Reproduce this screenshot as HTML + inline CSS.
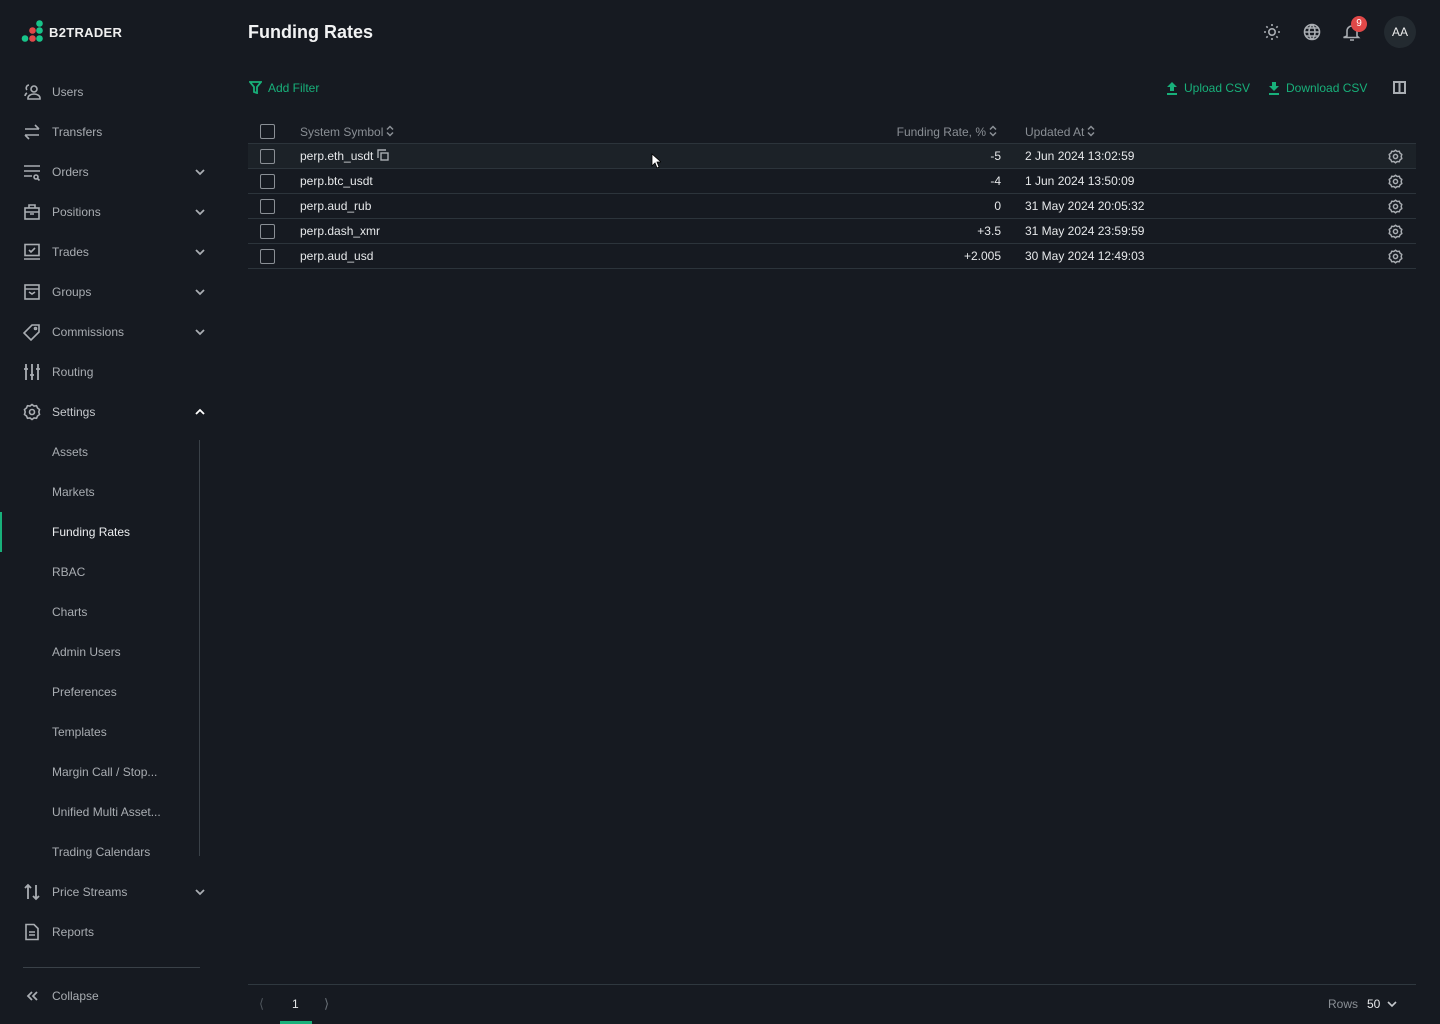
<!DOCTYPE html>
<html><head><meta charset="utf-8"><style>
*{margin:0;padding:0;box-sizing:border-box}
body{width:1440px;height:1024px;background:#161a21;font-family:"Liberation Sans",sans-serif;color:#e6e8ea;position:relative;overflow:hidden;font-size:12px}
.a{position:absolute}
.nav{position:absolute;left:52px;font-size:12px;color:#a9adb2;line-height:14px}
.ic{position:absolute;left:23px;width:18px;height:18px}
.chev{position:absolute;left:194px;width:12px;height:12px}
.sub{position:absolute;left:52px;font-size:12px;color:#a9adb2;line-height:14px}
.row{position:absolute;left:248px;width:1168px;height:25px;border-bottom:1px solid #2c343b}
.cb{position:absolute;left:12px;top:5px;width:15px;height:15px;border:1.5px solid #8a8f95;border-radius:2px}
.sym{position:absolute;left:52px;top:5px;font-size:12px;color:#e6e8ea}
.rate{position:absolute;right:415px;top:5px;font-size:12px}
.dt{position:absolute;left:777px;top:5px;font-size:12px}
.gear{position:absolute;left:1140px;top:5px;width:15px;height:15px}
.green{color:#18b07a}
.srt{vertical-align:-1px;margin-left:3px}
</style></head><body>
<svg class="a" style="left:21px;top:20px" width="23" height="23" viewBox="0 0 23 23">
<circle cx="18.5" cy="3.5" r="3.3" fill="#18c48a"/><circle cx="11.5" cy="10.5" r="3.3" fill="#e04848"/><circle cx="18.5" cy="10.5" r="3.3" fill="#18c48a"/>
<circle cx="4" cy="18.5" r="3.3" fill="#18c48a"/><circle cx="11.5" cy="18.5" r="3.3" fill="#e04848"/><circle cx="18.5" cy="18.5" r="3.3" fill="#18c48a"/></svg>
<div class="a" style="left:49px;top:25px;font-weight:bold;font-size:13px;color:#f0f0f0;letter-spacing:0.3px">B2TRADER</div>

<svg class="ic" style="top:83px" viewBox="0 0 18 18" fill="none" stroke="#a9adb2" stroke-width="1.6"><circle cx="11" cy="6" r="3"/><path d="M5 16v-1a6 4 0 0 1 12 0v1z"/><path d="M6 2a3 3 0 0 0-2 5M2 13a4 4 0 0 1 2-3"/></svg>
<div class="nav" style="top:85px">Users</div>
<svg class="ic" style="top:123px" viewBox="0 0 18 18" fill="none" stroke="#a9adb2" stroke-width="1.6"><path d="M2 6h14M12 2l4 4M16 12H2M6 16l-4-4"/></svg>
<div class="nav" style="top:125px">Transfers</div>
<svg class="ic" style="top:163px" viewBox="0 0 18 18" fill="none" stroke="#a9adb2" stroke-width="1.6"><path d="M1 3h16M1 8h16M1 13h8"/><circle cx="13" cy="14" r="2"/><path d="M14.5 15.5l2 2"/></svg>
<div class="nav" style="top:165px">Orders</div>
<svg class="ic" style="top:203px" viewBox="0 0 18 18" fill="none" stroke="#a9adb2" stroke-width="1.6"><rect x="2" y="5" width="14" height="11"/><path d="M6 5V2h6v3M2 9h14M7 11h4"/></svg>
<div class="nav" style="top:205px">Positions</div>
<svg class="ic" style="top:243px" viewBox="0 0 18 18" fill="none" stroke="#a9adb2" stroke-width="1.6"><rect x="2" y="1.5" width="14" height="11"/><path d="M1 16h16M6 7l2 2 4-4"/></svg>
<div class="nav" style="top:245px">Trades</div>
<svg class="ic" style="top:283px" viewBox="0 0 18 18" fill="none" stroke="#a9adb2" stroke-width="1.6"><rect x="2" y="2" width="14" height="14"/><path d="M2 6h14M6 9l3 2 3-2"/></svg>
<div class="nav" style="top:285px">Groups</div>
<svg class="ic" style="top:323px" viewBox="0 0 18 18" fill="none" stroke="#a9adb2" stroke-width="1.6"><path d="M9 2h7v7l-8 8-7-7z"/><circle cx="12.5" cy="5.5" r="1"/></svg>
<div class="nav" style="top:325px">Commissions</div>
<svg class="ic" style="top:363px" viewBox="0 0 18 18" fill="none" stroke="#a9adb2" stroke-width="1.8"><path d="M3 1v16M9 1v16M15 1v16M1 6h4M7 12h4M13 6h4"/></svg>
<div class="nav" style="top:365px">Routing</div>
<svg class="ic" style="top:403px" viewBox="0 0 18 18" fill="none" stroke="#a9adb2" stroke-width="1.6"><path d="M9 1.5l2 1.5 2.5-.3 1 2.3 2 1.5-.7 2.5.7 2.5-2 1.5-1 2.3-2.5-.3-2 1.5-2-1.5-2.5.3-1-2.3-2-1.5.7-2.5-.7-2.5 2-1.5 1-2.3 2.5.3z"/><circle cx="9" cy="9" r="2.5"/></svg>
<div class="nav" style="top:405px;color:#c5c8cc">Settings</div>

<svg class="chev" style="top:166px" viewBox="0 0 12 12" fill="none" stroke="#a9adb2" stroke-width="1.8"><path d="M2 4l4 4 4-4"/></svg>
<svg class="chev" style="top:206px" viewBox="0 0 12 12" fill="none" stroke="#a9adb2" stroke-width="1.8"><path d="M2 4l4 4 4-4"/></svg>
<svg class="chev" style="top:246px" viewBox="0 0 12 12" fill="none" stroke="#a9adb2" stroke-width="1.8"><path d="M2 4l4 4 4-4"/></svg>
<svg class="chev" style="top:286px" viewBox="0 0 12 12" fill="none" stroke="#a9adb2" stroke-width="1.8"><path d="M2 4l4 4 4-4"/></svg>
<svg class="chev" style="top:326px" viewBox="0 0 12 12" fill="none" stroke="#a9adb2" stroke-width="1.8"><path d="M2 4l4 4 4-4"/></svg>
<svg class="chev" style="top:406px" viewBox="0 0 12 12" fill="none" stroke="#ffffff" stroke-width="1.8"><path d="M2 8l4-4 4 4"/></svg>
<svg class="chev" style="top:886px" viewBox="0 0 12 12" fill="none" stroke="#a9adb2" stroke-width="1.8"><path d="M2 4l4 4 4-4"/></svg>

<div class="a" style="left:199px;top:440px;width:1px;height:416px;background:#3a4148"></div>
<div class="sub" style="top:445px">Assets</div>
<div class="sub" style="top:485px">Markets</div>
<div class="a" style="left:0;top:512px;width:2px;height:40px;background:#18b07a"></div>
<div class="sub" style="top:525px;color:#eceef0">Funding Rates</div>
<div class="sub" style="top:565px">RBAC</div>
<div class="sub" style="top:605px">Charts</div>
<div class="sub" style="top:645px">Admin Users</div>
<div class="sub" style="top:685px">Preferences</div>
<div class="sub" style="top:725px">Templates</div>
<div class="sub" style="top:765px">Margin Call / Stop...</div>
<div class="sub" style="top:805px">Unified Multi Asset...</div>
<div class="sub" style="top:845px">Trading Calendars</div>

<svg class="ic" style="top:883px" viewBox="0 0 18 18" fill="none" stroke="#a9adb2" stroke-width="1.8"><path d="M5 16V2M2 5l3-3 3 3M13 2v14M10 13l3 3 3-3"/></svg>
<div class="nav" style="top:885px">Price Streams</div>
<svg class="ic" style="top:923px" viewBox="0 0 18 18" fill="none" stroke="#a9adb2" stroke-width="1.6"><path d="M3 1.5h8l4 4v11H3z"/><path d="M6 9h6M6 12h6"/></svg>
<div class="nav" style="top:925px">Reports</div>
<div class="a" style="left:23px;top:967px;width:177px;height:1px;background:#3a4148"></div>
<svg class="ic" style="top:987px" viewBox="0 0 18 18" fill="none" stroke="#a9adb2" stroke-width="1.8"><path d="M9 5l-4 4 4 4M14 5l-4 4 4 4"/></svg>
<div class="nav" style="top:989px">Collapse</div>

<div class="a" style="left:248px;top:22px;font-size:18px;font-weight:bold;color:#f2f3f4">Funding Rates</div>
<svg class="a" style="left:1263px;top:23px" width="18" height="18" viewBox="0 0 18 18" fill="none" stroke="#a9adb2" stroke-width="1.6"><circle cx="9" cy="9" r="3.2"/><path d="M9 1v2M9 15v2M1 9h2M15 9h2M3.3 3.3l1.4 1.4M13.3 13.3l1.4 1.4M3.3 14.7l1.4-1.4M13.3 4.7l1.4-1.4"/></svg>
<svg class="a" style="left:1303px;top:23px" width="18" height="18" viewBox="0 0 18 18" fill="none" stroke="#a9adb2" stroke-width="1.6"><circle cx="9" cy="9" r="7.5"/><path d="M1.5 9h15M9 1.5c-4 4-4 11 0 15M9 1.5c4 4 4 11 0 15M3 5h12M3 13h12"/></svg>
<svg class="a" style="left:1343px;top:23px" width="18" height="18" viewBox="0 0 18 18" fill="none" stroke="#a9adb2" stroke-width="1.6"><path d="M4 13V8a5 5 0 0 1 10 0v5l1.5 1.5h-15zM7 17h4"/></svg>
<div class="a" style="left:1351px;top:16px;width:16px;height:16px;border-radius:50%;background:#e04848;color:#fff;font-size:10px;text-align:center;line-height:16px">9</div>
<div class="a" style="left:1384px;top:16px;width:32px;height:32px;border-radius:50%;background:#232a30;color:#eee;font-size:12px;text-align:center;line-height:32px">AA</div>

<svg class="a" style="left:249px;top:81px" width="13" height="13" viewBox="0 0 13 13" fill="none" stroke="#18b07a" stroke-width="1.8"><path d="M1 1h11L8 6v6L5 11V6z"/></svg>
<div class="a green" style="left:268px;top:81px">Add Filter</div>
<svg class="a" style="left:1166px;top:81px" width="12" height="14" viewBox="0 0 12 14" fill="#18b07a"><path d="M6 1l5 5H8v4H4V6H1z"/><rect x="1" y="12" width="10" height="2"/></svg>
<div class="a green" style="left:1184px;top:81px">Upload CSV</div>
<svg class="a" style="left:1268px;top:81px" width="12" height="14" viewBox="0 0 12 14" fill="#18b07a"><path d="M6 10l5-5H8V1H4v4H1z"/><rect x="1" y="12" width="10" height="2"/></svg>
<div class="a green" style="left:1286px;top:81px">Download CSV</div>
<svg class="a" style="left:1393px;top:81px" width="13" height="13" viewBox="0 0 13 13" fill="none" stroke="#a9adb2" stroke-width="2"><rect x="1" y="1" width="11" height="11"/><path d="M6.5 1v11"/></svg>

<div class="row" style="top:119px;height:25px">
<div class="cb"></div>
<div class="sym" style="color:#8a8f95;top:6px">System Symbol<svg class="srt" width="8" height="12" viewBox="0 0 8 12" fill="none" stroke="#8a8f95" stroke-width="1.5"><path d="M1 4.5l3-3 3 3M1 7.5l3 3 3-3"/></svg></div>
<div class="rate" style="right:419px;color:#8a8f95;top:6px">Funding Rate, %<svg class="srt" width="8" height="12" viewBox="0 0 8 12" fill="none" stroke="#8a8f95" stroke-width="1.5"><path d="M1 4.5l3-3 3 3M1 7.5l3 3 3-3"/></svg></div>
<div class="dt" style="color:#8a8f95;top:6px">Updated At<svg class="srt" width="8" height="12" viewBox="0 0 8 12" fill="none" stroke="#8a8f95" stroke-width="1.5"><path d="M1 4.5l3-3 3 3M1 7.5l3 3 3-3"/></svg></div>
</div>
<div class="row" style="top:144px;background:#1c2228"><div class="cb"></div><div class="sym">perp.eth_usdt <svg width="12" height="12" viewBox="0 0 12 12" fill="none" stroke="#a9adb2" stroke-width="1.4" style="vertical-align:-1px"><rect x="4" y="4" width="7" height="7"/><path d="M1 9V1h8"/></svg></div><div class="rate">-5</div><div class="dt">2 Jun 2024 13:02:59</div>
<svg class="gear" viewBox="0 0 18 18" fill="none" stroke="#a9adb2" stroke-width="1.8"><path d="M9 1.5l2 1.5 2.5-.3 1 2.3 2 1.5-.7 2.5.7 2.5-2 1.5-1 2.3-2.5-.3-2 1.5-2-1.5-2.5.3-1-2.3-2-1.5.7-2.5-.7-2.5 2-1.5 1-2.3 2.5.3z"/><circle cx="9" cy="9" r="2.5"/></svg></div>
<div class="row" style="top:169px"><div class="cb"></div><div class="sym">perp.btc_usdt</div><div class="rate">-4</div><div class="dt">1 Jun 2024 13:50:09</div>
<svg class="gear" viewBox="0 0 18 18" fill="none" stroke="#a9adb2" stroke-width="1.8"><path d="M9 1.5l2 1.5 2.5-.3 1 2.3 2 1.5-.7 2.5.7 2.5-2 1.5-1 2.3-2.5-.3-2 1.5-2-1.5-2.5.3-1-2.3-2-1.5.7-2.5-.7-2.5 2-1.5 1-2.3 2.5.3z"/><circle cx="9" cy="9" r="2.5"/></svg></div>
<div class="row" style="top:194px"><div class="cb"></div><div class="sym">perp.aud_rub</div><div class="rate">0</div><div class="dt">31 May 2024 20:05:32</div>
<svg class="gear" viewBox="0 0 18 18" fill="none" stroke="#a9adb2" stroke-width="1.8"><path d="M9 1.5l2 1.5 2.5-.3 1 2.3 2 1.5-.7 2.5.7 2.5-2 1.5-1 2.3-2.5-.3-2 1.5-2-1.5-2.5.3-1-2.3-2-1.5.7-2.5-.7-2.5 2-1.5 1-2.3 2.5.3z"/><circle cx="9" cy="9" r="2.5"/></svg></div>
<div class="row" style="top:219px"><div class="cb"></div><div class="sym">perp.dash_xmr</div><div class="rate">+3.5</div><div class="dt">31 May 2024 23:59:59</div>
<svg class="gear" viewBox="0 0 18 18" fill="none" stroke="#a9adb2" stroke-width="1.8"><path d="M9 1.5l2 1.5 2.5-.3 1 2.3 2 1.5-.7 2.5.7 2.5-2 1.5-1 2.3-2.5-.3-2 1.5-2-1.5-2.5.3-1-2.3-2-1.5.7-2.5-.7-2.5 2-1.5 1-2.3 2.5.3z"/><circle cx="9" cy="9" r="2.5"/></svg></div>
<div class="row" style="top:244px"><div class="cb"></div><div class="sym">perp.aud_usd</div><div class="rate">+2.005</div><div class="dt">30 May 2024 12:49:03</div>
<svg class="gear" viewBox="0 0 18 18" fill="none" stroke="#a9adb2" stroke-width="1.8"><path d="M9 1.5l2 1.5 2.5-.3 1 2.3 2 1.5-.7 2.5.7 2.5-2 1.5-1 2.3-2.5-.3-2 1.5-2-1.5-2.5.3-1-2.3-2-1.5.7-2.5-.7-2.5 2-1.5 1-2.3 2.5.3z"/><circle cx="9" cy="9" r="2.5"/></svg></div>

<svg class="a" style="left:651px;top:153px" width="10" height="16" viewBox="0 0 10 16"><path d="M1 1v12l3-3 2 5 2-1-2-5h4z" fill="#fff" stroke="#000" stroke-width="0.8"/></svg>

<div class="a" style="left:248px;top:984px;width:1168px;height:1px;background:#2f383f"></div>
<div class="a" style="left:259px;top:996px;color:#4e555c;font-size:13px">&#10216;</div>
<div class="a" style="left:292px;top:997px;color:#e6e8ea">1</div>
<div class="a" style="left:280px;top:1021px;width:32px;height:3px;background:#18b07a"></div>
<div class="a" style="left:324px;top:996px;color:#6a7178;font-size:13px">&#10217;</div>
<div class="a" style="left:1328px;top:997px;color:#8a8f95">Rows</div>
<div class="a" style="left:1367px;top:997px;color:#e6e8ea">50</div>
<svg class="a" style="left:1386px;top:999px" width="12" height="10" viewBox="0 0 12 10" fill="none" stroke="#c5c8cc" stroke-width="1.6"><path d="M2 3l4 4 4-4"/></svg>
</body></html>
